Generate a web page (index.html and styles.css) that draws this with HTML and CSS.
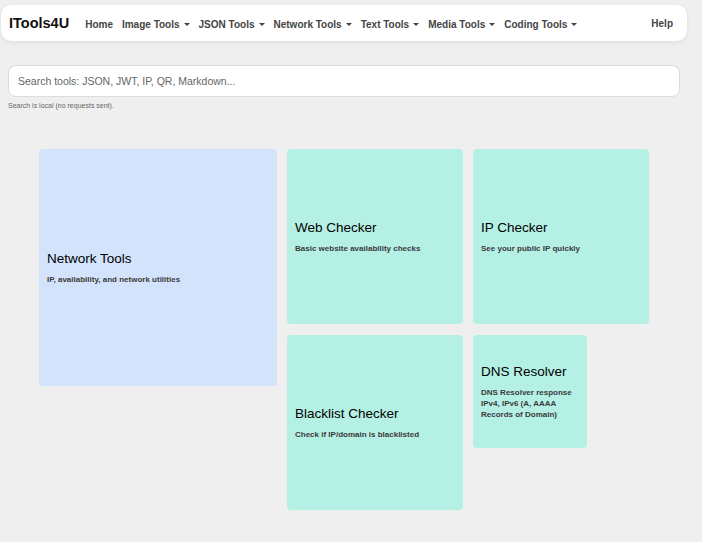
FILE: index.html
```html
<!DOCTYPE html>
<html lang="en">
<head>
    <meta charset="UTF-8">
    <meta name="viewport" content="width=device-width, initial-scale=1.0">
    <title>ITools4U</title>
    <link rel="stylesheet" href="styles.css">
</head>
<body>
    <nav class="navbar">
        <a class="brand" href="#">ITools4U</a>
        <ul class="nav-links">
            <li><a href="#">Home</a></li>
            <li><a href="#" class="dropdown">Image Tools</a></li>
            <li><a href="#" class="dropdown">JSON Tools</a></li>
            <li><a href="#" class="dropdown">Network Tools</a></li>
            <li><a href="#" class="dropdown">Text Tools</a></li>
            <li><a href="#" class="dropdown">Media Tools</a></li>
            <li><a href="#" class="dropdown">Coding Tools</a></li>
        </ul>
        <a class="help" href="#">Help</a>
    </nav>

    <div class="search">
        <input type="text" placeholder="Search tools: JSON, JWT, IP, QR, Markdown...">
        <p class="search-note">Search is local (no requests sent).</p>
    </div>

    <main class="tiles">
        <a href="#" class="tile tile-big blue">
            <h3>Network Tools</h3>
            <p>IP, availability, and network utilities</p>
        </a>
        <div class="tile-col">
            <div class="tile-row">
                <a href="#" class="tile tile-md teal">
                    <h3>Web Checker</h3>
                    <p>Basic website availability checks</p>
                </a>
                <a href="#" class="tile tile-md teal">
                    <h3>IP Checker</h3>
                    <p>See your public IP quickly</p>
                </a>
            </div>
            <div class="tile-row">
                <a href="#" class="tile tile-md teal">
                    <h3>Blacklist Checker</h3>
                    <p>Check if IP/domain is blacklisted</p>
                </a>
                <a href="#" class="tile tile-sm teal">
                    <h3>DNS Resolver</h3>
                    <p>DNS Resolver response IPv4, IPv6 (A, AAAA Records of Domain)</p>
                </a>
            </div>
        </div>
    </main>
</body>
</html>
```

FILE: styles.css
```css
body {
    font-family: "Liberation Sans", Arial, sans-serif;
    margin: 0;
    background-color: #efefef;
    color: #222;
}
a {
    text-decoration: none;
    color: inherit;
}
.navbar {
    display: flex;
    align-items: center;
    height: 36px;
    margin: 5px 15px 0 1px;
    padding: 0 14px 0 8px;
    background-color: #ffffff;
    border-radius: 10px;
    box-shadow: 0 1px 4px rgba(0, 0, 0, 0.08);
}
.brand {
    font-size: 14.5px;
    font-weight: bold;
    color: #111;
    margin-right: 16px;
}
.nav-links {
    display: flex;
    gap: 9px;
    list-style: none;
    margin: 0;
    padding: 0;
    flex: 1;
}
.nav-links a,
.help {
    font-size: 10px;
    font-weight: bold;
    color: #444;
}
.dropdown::after {
    content: "";
    display: inline-block;
    margin-left: 4px;
    vertical-align: 2px;
    border-top: 3px solid #444;
    border-left: 3px solid transparent;
    border-right: 3px solid transparent;
}
.search {
    margin: 24px 22px 0 8px;
}
.search input {
    display: block;
    box-sizing: border-box;
    width: 100%;
    height: 32px;
    padding: 0 9px;
    border: 1px solid #dcdcdc;
    border-radius: 8px;
    background-color: #ffffff;
    font-family: inherit;
    font-size: 10.5px;
}
.search input::placeholder {
    color: #666;
}
.search-note {
    margin: 5px 0 0;
    font-size: 7px;
    color: #666;
}
.tiles {
    display: flex;
    align-items: flex-start;
    gap: 10px;
    margin: 40px 0 0 39px;
}
.tile-col {
    display: flex;
    flex-direction: column;
    gap: 11px;
}
.tile-row {
    display: flex;
    align-items: flex-start;
    gap: 10px;
}
.tile {
    display: flex;
    flex-direction: column;
    justify-content: center;
    box-sizing: border-box;
    padding: 0 8px;
    border-radius: 4px;
}
.tile-big {
    width: 238px;
    height: 237px;
}
.tile-md {
    width: 176px;
    height: 175px;
}
.tile-sm {
    width: 114px;
    height: 113px;
    padding-right: 6px;
}
.blue {
    background-color: #d3e3fb;
}
.teal {
    background-color: #b5f0e4;
}
.tile h3 {
    margin: 0 0 8px;
    font-size: 13.5px;
    font-weight: normal;
    color: #000;
}
.tile p {
    margin: 0;
    font-size: 8px;
    font-weight: bold;
    line-height: 11px;
    color: #3a3a3a;
}
```
